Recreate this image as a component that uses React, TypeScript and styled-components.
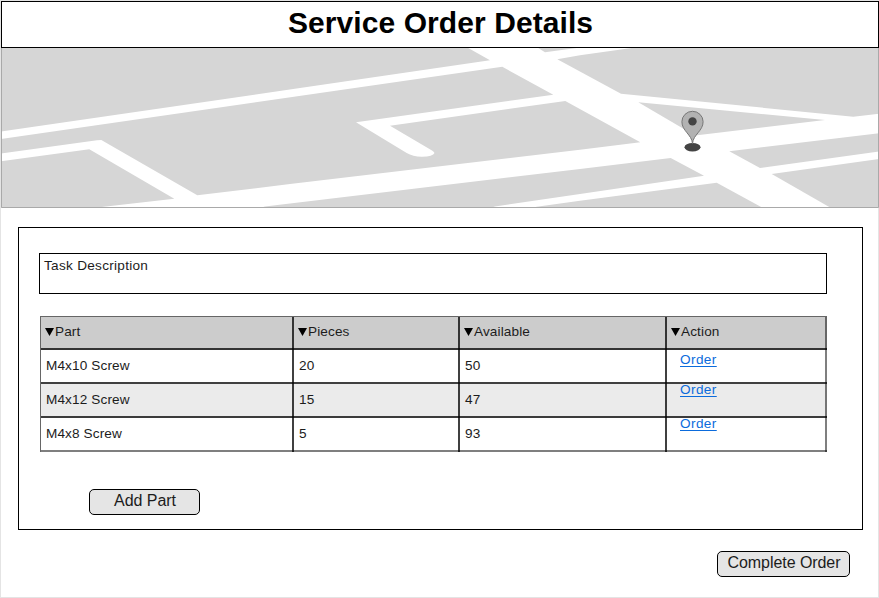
import React from "react";
import styled, { createGlobalStyle } from "styled-components";

const GlobalStyle = createGlobalStyle`
  * { box-sizing: border-box; }
  body { margin: 0; background: #fff; color: #000; font-family: "Liberation Sans", Arial, sans-serif; }
`;

const Page = styled.div`
  width: 879px;
  height: 598px;
  border: 1px solid #e4e4e4;
  display: flex;
  flex-direction: column;
`;

const Header = styled.header`
  flex: none;
  width: 878px;
  height: 47px;
  border: 1px solid #000;
  text-align: center;
`;

const Title = styled.h1`
  margin: 0;
  padding-left: 1px;
  font-size: 30px;
  font-weight: bold;
  line-height: 42px;
  letter-spacing: 0.08px;
`;

const MapView = styled.svg`
  display: block;
  flex: none;
  width: 878px;
  height: 160px;
`;

const Panel = styled.main`
  flex: none;
  width: 845px;
  height: 303px;
  margin: 19px 0 0 17px;
  padding: 25px 35px 14px 20px;
  border: 1px solid #000;
  display: flex;
  flex-direction: column;
  align-items: flex-start;
`;

const TaskDescription = styled.div`
  width: 788px;
  height: 41px;
  padding: 4px 4px;
  border: 1px solid #000;
  color: #1c1c1c;
  font-size: 13.6px;
  line-height: 16px;
  letter-spacing: 0.28px;
`;

const PartsTable = styled.div`
  width: 787px;
  margin: 22px 0 0 1px;
  border: 1px solid #666;
  border-width: 1px 0 0 1px;
`;

const Row = styled.div<{ $fill: string; $header?: boolean }>`
  display: grid;
  grid-template-columns: 253px 166px 207px 160px;
  height: ${(p) => (p.$header ? 33 : 34)}px;
  background: ${(p) => p.$fill};
  color: #1c1c1c;
  font-size: 13.6px;
  letter-spacing: 0.12px;
  line-height: ${(p) => (p.$header ? 29 : 32)}px;
`;

const rule = (light?: boolean) => {
  const c = `rgba(0, 0, 0, ${light ? 0.5 : 0.75})`;
  return `linear-gradient(${c}, ${c})`;
};

const Cell = styled.div<{ $last?: boolean; $bottom?: boolean; $header?: boolean }>`
  display: flex;
  align-items: flex-start;
  padding-left: ${(p) => (p.$header ? 4 : 5)}px;
  background:
    ${(p) => rule(p.$last)} right / 2px 100% no-repeat,
    ${(p) => rule(p.$bottom)} bottom / 100% 2px no-repeat;
`;

const SortIcon = styled.svg`
  width: 9px;
  height: 8px;
  margin: 11px 1px 0 0;
`;

const OrderLink = styled.a<{ $top: number }>`
  margin: ${(p) => p.$top}px 0 0 8px;
  color: #0b6bdc;
  line-height: 16px;
  letter-spacing: 0.4px;
  text-decoration: underline;
  text-underline-offset: 2px;
  text-decoration-thickness: 1px;
`;

const Button = styled.button<{ $width: number }>`
  flex: none;
  width: ${(p) => p.$width}px;
  height: 26px;
  padding: 0 0 2px 1px;
  border: 1px solid #000;
  border-radius: 5px;
  background: #e5e5e5;
  color: #1c1c1c;
  font: 16px/22px "Liberation Sans", Arial, sans-serif;
  letter-spacing: -0.06px;
`;

const AddButton = styled(Button)`
  margin: 37px 0 0 50px;
`;

const Footer = styled.footer`
  display: flex;
  justify-content: flex-end;
  padding: 21px 28px 0 0;
`;

const blocks = [
  "1,47 467.7,47.7 490,60.3 300,88 1,131.4",
  "538,47.8 545,52.3 578,47.8",
  "633,47.8 580,55.3 557.3,59.3 621,93.7 853.3,116.7 879,113.8 879,47",
  "1,161.3 89.3,149.3 174.3,198.7 101.7,207 101,208 1,208",
  "260,208 265,206.6 290,203.5 580,169 670.7,158 704,175.7 580,194 495,206.5 490,208",
  "532,208 536.7,206.8 580,200.7 716.7,182.7 763,208",
  "831,208 771.7,174 879,159 879,208",
  "729.3,151.3 879,133.2 879,151.6 760,168",
  "638.3,102.3 825,120 695,135.4",
];

const parts = [
  { name: "M4x10 Screw", pieces: 20, available: 50, linkTop: 2 },
  { name: "M4x12 Screw", pieces: 15, available: 47, linkTop: -2 },
  { name: "M4x8 Screw", pieces: 5, available: 93, linkTop: -2 },
];

const columns = ["Part", "Pieces", "Available", "Action"];

function LocationMap() {
  return (
    <MapView viewBox="1 48 878 160" aria-label="Map">
      <rect x="1" y="48" width="878" height="160" fill="#fff" />
      <g fill="#d6d6d6">
        {blocks.map((points) => (
          <polygon key={points} points={points} />
        ))}
        <path d="M1 139.1L502.3 66.8L553.3 94.7L356 122.3L406.7 153Q413 156.8 422 156.7Q433 156.5 434.5 153Q434 151.5 432 150.5L390 125.7L565.3 101L640.3 142.3L580 149.7L290 184L197.3 195.3L101.3 140L97 140.2L1 153.4Z" />
      </g>
      <path d="M1.5 48V207.5H878.5V48" fill="none" stroke="#a9a9a9" />
      <ellipse cx="692.5" cy="147.3" rx="8" ry="4.2" fill="#444" />
      <path
        d="M692.5 143.5C691.8 134.5 681.9 131 681.9 121.7A10.6 10.4 0 0 1 703.1 121.7C703.1 131 693.2 134.5 692.5 143.5Z"
        fill="#b2b2b2"
        stroke="#777"
        strokeWidth="1"
      />
      <circle cx="692.5" cy="121.4" r="4.2" fill="#444" />
    </MapView>
  );
}

export default function App() {
  return (
    <>
      <GlobalStyle />
      <Page>
        <Header>
          <Title>Service Order Details</Title>
        </Header>
        <LocationMap />
        <Panel>
          <TaskDescription>Task Description</TaskDescription>
          <PartsTable>
            <Row $fill="#ccc" $header>
              {columns.map((label, i) => (
                <Cell key={label} $header $last={i === 3}>
                  <SortIcon viewBox="0 0 9 8">
                    <path d="M0 0H9L4.5 8Z" />
                  </SortIcon>
                  {label}
                </Cell>
              ))}
            </Row>
            {parts.map((part, i) => {
              const bottom = i === parts.length - 1;
              return (
                <Row key={part.name} $fill={i % 2 ? "#ebebeb" : "#fff"}>
                  <Cell $bottom={bottom}>{part.name}</Cell>
                  <Cell $bottom={bottom}>{part.pieces}</Cell>
                  <Cell $bottom={bottom}>{part.available}</Cell>
                  <Cell $bottom={bottom} $last>
                    <OrderLink $top={part.linkTop}>Order</OrderLink>
                  </Cell>
                </Row>
              );
            })}
          </PartsTable>
          <AddButton $width={111}>Add Part</AddButton>
        </Panel>
        <Footer>
          <Button $width={133}>Complete Order</Button>
        </Footer>
      </Page>
    </>
  );
}
